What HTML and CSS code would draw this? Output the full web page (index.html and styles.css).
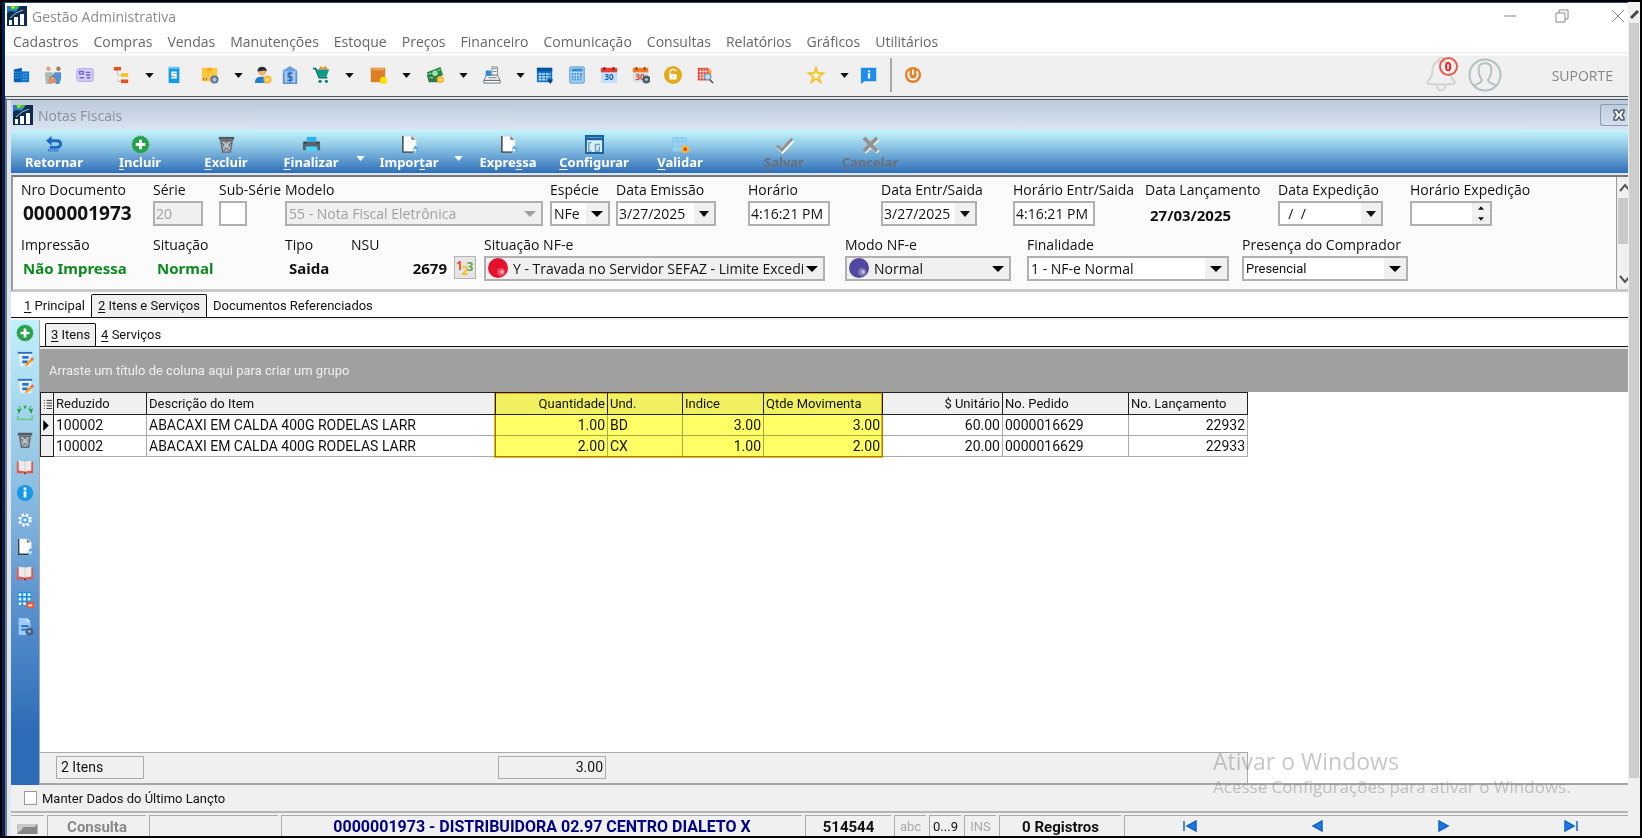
FILE: index.html
```html
<!DOCTYPE html>
<html lang="pt-BR">
<head>
  <meta charset="UTF-8" />
  <meta name="viewport" content="width=device-width, initial-scale=1" />
  <title>Gestão Administrativa</title>
  <link rel="stylesheet" href="styles.css">
</head>
<body>
  <!-- Shared icons -->
  <svg class="sprite" aria-hidden="true">
    <symbol id="i-logo" viewBox="0 0 20 20">
      <rect width="20" height="20" fill="#0d2c4f"/>
      <path d="M0 0h13L9 6 3 5 0 7z" fill="#2b76d2"/><path d="M3 0h9l-2 3-6 1z" fill="#35c532"/><path d="M4 1l4-1-2 3z" fill="#e7e531"/>
      <path d="M2 14h3v5H2zM7 11h4v8H7zM13 8h4v11h-4z" fill="#fff"/><path d="M3 12l6-5 7-3" stroke="#9fc0dd" fill="none"/>
    </symbol>
    <symbol id="i-plus" viewBox="0 0 20 20">
      <circle cx="10" cy="10" r="9" fill="#22a34a" stroke="#5a9c5f" stroke-dasharray="2 2"/>
      <path d="M10 5v10M5 10h10" stroke="#fff" stroke-width="3"/>
    </symbol>
    <symbol id="i-trash" viewBox="0 0 20 20">
      <path d="M2 2h16v3H2z" fill="#59595c"/><path d="M4 6h12l-2 12H6z" fill="#a9b5bd" stroke="#66696c" stroke-width="1.500"/>
      <path d="M5 8l8 9M15 8l-8 9M8 6l6 6M12 6l-6 6" stroke="#5d6062"/><circle cx="10" cy="11" r="2.500" fill="#b9c3ca"/>
    </symbol>
    <symbol id="i-page" viewBox="0 0 20 20">
      <path d="M3 1h10l4 4v13H3z" fill="#fff" stroke="#c9d3da"/><path d="M3 1v17h11" fill="none" stroke="#3b4146" stroke-width="1.500"/>
      <path d="M12 1v4h4z" fill="#6d767c"/><path d="M16 11l3 3v4h-5v-4z" fill="#55a8e6"/><circle cx="16" cy="16" r="1.500" fill="#dff2ff"/>
    </symbol>
    <symbol id="i-edit" viewBox="0 0 20 20">
      <path d="M3 3h14v14H5z" fill="#e9eef3"/><path d="M2 2h16" stroke="#3266c4" stroke-width="2"/>
      <path d="M7 7h7M7 12h6" stroke="#1d77d4" stroke-width="3"/><path d="M10 17l1-3 6-6 2 2-6 6z" fill="#fb9a12"/><path d="M16 9l2-2 2 2-2 2z" fill="#ee6257"/>
    </symbol>
    <symbol id="i-book" viewBox="0 0 20 20">
      <path d="M1 4h18v13H1z" fill="#e85648"/><path d="M3 3l7 1 7-1v11l-7 1-7-1z" fill="#ececec"/><path d="M10 4v11" stroke="#ccc"/><path d="M9 16h2v2H9z" fill="#812c24"/>
    </symbol>
    <symbol id="i-caret" viewBox="0 0 10 6"><path d="M0 0h10L5 6z" fill="currentColor"/></symbol>
    <symbol id="i-ball" viewBox="0 0 20 20">
      <circle cx="10" cy="10" r="10" fill="currentColor"/><circle cx="13" cy="14" r="4" fill="#fff" opacity=".25"/><circle cx="14" cy="14" r="2" fill="#fff" opacity=".5"/>
    </symbol>
  </svg>

  <div class="screen">
    <div class="app">
      <header class="titlebar">
        <svg class="logo"><use href="#i-logo"/></svg>
        <h1 class="app-title">Gestão Administrativa</h1>
        <div class="window-buttons">
          <button aria-label="Minimizar"><svg viewBox="0 0 14 14"><path d="M1 7h12"/></svg></button>
          <button aria-label="Restaurar"><svg viewBox="0 0 14 14"><path d="M1 4h9v9H1zM4 4V1h9v9h-3"/></svg></button>
          <button aria-label="Fechar"><svg viewBox="0 0 14 14"><path d="M1 1l12 12M13 1L1 13"/></svg></button>
        </div>
      </header>

      <nav class="menu">
        <a href="#">Cadastros</a><a href="#">Compras</a><a href="#">Vendas</a><a href="#">Manutenções</a><a href="#">Estoque</a><a href="#">Preços</a><a href="#">Financeiro</a><a href="#">Comunicação</a><a href="#">Consultas</a><a href="#">Relatórios</a><a href="#">Gráficos</a><a href="#">Utilitários</a>
      </nav>

      <div class="toolbar">
        <button class="tool" aria-label="Empresas"><svg viewBox="0 0 20 20"><path d="M2 4l9-2v16H2z" fill="#0b62b5"/><path d="M10 6h9v12h-9z" fill="#1377cf"/><path d="M3 7h7M3 10h7M3 13h7M12 9h6M12 12h6M12 15h6" stroke="#57b3f0" stroke-dasharray="2 1"/></svg></button>
        <button class="tool" aria-label="Clientes"><svg viewBox="0 0 20 20"><circle cx="5" cy="3" r="2.500" fill="#dca678"/><circle cx="16" cy="3" r="2.500" fill="#ad7b52"/><path d="M1 7h8l3 4-3 2v7H2z" fill="#a9bdb4"/><path d="M12 7h7v7l-2 6h-4l-1-6-3-3z" fill="#5292cf"/><path d="M5 14h8v5H5z" fill="#e98c64"/><path d="M7 14v-2h4v2" stroke="#b4583c" fill="none"/></svg></button>
        <button class="tool" aria-label="Cartões"><svg viewBox="0 0 20 20"><rect x="1" y="3" width="18" height="14" rx="2" fill="#d5cffa" stroke="#a69ae8"/><path d="M4 6h4v3H4zM4 13h5M11 7h5M11 10h5M12 13h4" stroke="#6f60c8" fill="none" stroke-width="1.500"/></svg></button>
        <span class="tool-group">
          <button aria-label="Estrutura"><svg viewBox="0 0 20 20"><path d="M6 15v2h6M6 5v5h6" stroke="#bbb" fill="none"/><path d="M2 1h8v4H2z" fill="#e65122"/><path d="M10 8h8v4h-8z" fill="#fcc311"/><path d="M10 15h8v4h-8z" fill="#e65122"/></svg></button>
          <button class="drop" aria-label="Mais opções de estrutura"><svg><use href="#i-caret"/></svg></button>
        </span>
        <button class="tool" aria-label="Serviços"><svg viewBox="0 0 20 20"><path d="M4 1h12v18H4z" fill="#179ae6"/><path d="M4 1h12v2H4z" fill="#76c8f4"/><path d="M13 7H8v3h4v3H7" stroke="#fff" stroke-width="2" fill="none"/></svg></button>
        <span class="tool-group">
          <button aria-label="Produtos"><svg viewBox="0 0 20 20"><path d="M1 2h17v15H1z" fill="#fdc740"/><path d="M7 2h5v4H7z" fill="#f6a921"/><path d="M3 13v3M6 13v3" stroke="#7c6a36"/><circle cx="15" cy="15" r="3.500" fill="#b5bfcc" stroke="#53719b" stroke-width="2"/></svg></button>
          <button class="drop" aria-label="Mais opções de produtos"><svg><use href="#i-caret"/></svg></button>
        </span>
        <button class="tool" aria-label="Vendedores"><svg viewBox="0 0 20 20"><path d="M1 19c0-7 5-7 8-7s7 1 7 7z" fill="#247fd0"/><circle cx="9" cy="6" r="4.500" fill="#f3b36d"/><path d="M4 6c-1-7 11-7 10 0-3-2-6 0-10 0z" fill="#232b35"/><circle cx="15" cy="15" r="4.500" fill="#fcbd32"/><circle cx="15" cy="15" r="2" fill="#ffe387"/></svg></button>
        <button class="tool tool-narrow" aria-label="Banco"><svg viewBox="0 0 20 20"><path d="M10 0l8 5v2H2V5z" fill="#6ba0df"/><path d="M3 6h14v12H3z" fill="#a7caef"/><path d="M2 18h16v2H2zM2 7h2v11H2zM16 7h2v11h-2z" fill="#5d92d5"/><path d="M13 8H8v4h4v4H7M10 6v12" stroke="#2d67bd" stroke-width="1.500" fill="none"/></svg></button>
        <span class="tool-group">
          <button aria-label="Vendas"><svg viewBox="0 0 20 20"><path d="M7 4l3-4 2 2 3-2 3 4z" fill="#f4911f"/><path d="M1 3h3l4 10h9" stroke="#0c766e" stroke-width="2" fill="none"/><path d="M5 4h14l-3 8H8z" fill="#0c9b8b"/><circle cx="9" cy="17" r="1.800" fill="#0c7f74"/><circle cx="16" cy="17" r="1.800" fill="#0c7f74"/></svg></button>
          <button class="drop" aria-label="Mais opções de vendas"><svg><use href="#i-caret"/></svg></button>
        </span>
        <span class="tool-group">
          <button aria-label="Estoque"><svg viewBox="0 0 20 20"><path d="M2 2h16v16H2z" fill="#dd7d25"/><path d="M2 2h16l-2 3H4z" fill="#f0a054"/><circle cx="16" cy="16" r="4" fill="#ffe000"/></svg></button>
          <button class="drop" aria-label="Mais opções de estoque"><svg><use href="#i-caret"/></svg></button>
        </span>
        <span class="tool-group">
          <button aria-label="Financeiro"><svg viewBox="0 0 20 20"><path d="M1 7l15-6 3 9-15 6z" fill="#258d45"/><path d="M1 10h16v8H3z" fill="#2d7c45"/><circle cx="10" cy="8" r="3" fill="#a8dfb2"/><path d="M3 9l3-1M13 5l3-1M4 13h4" stroke="#c0e9c7"/><circle cx="16" cy="15" r="4" fill="#fdb72e"/><circle cx="16" cy="15" r="1.500" fill="#ffe48a"/></svg></button>
          <button class="drop" aria-label="Mais opções de financeiro"><svg><use href="#i-caret"/></svg></button>
        </span>
        <span class="tool-group">
          <button aria-label="Caixa"><svg viewBox="0 0 20 20"><path d="M4 10h12l3 6H1zM1 16h18v3H1z" fill="#f4f6f8" stroke="#687078"/><path d="M10 1h6v9h-6z" fill="#fff" stroke="#777"/><path d="M3 5h6v6H3z" fill="#2c8bd8"/><path d="M11 3h4M11 6h4M6 13h9" stroke="#6b7177"/></svg></button>
          <button class="drop" aria-label="Mais opções de caixa"><svg><use href="#i-caret"/></svg></button>
        </span>
        <button class="tool" aria-label="Agenda"><svg viewBox="0 0 20 20"><path d="M1 2h17v16H1z" fill="#1675c7"/><path d="M1 2h17v4H1z" fill="#0755a0"/><path d="M3 9h13M3 12h13M3 15h10" stroke="#b9e0ff" stroke-width="2" stroke-dasharray="3 1"/><path d="M12 15h7l-3 5z" fill="#06457f"/></svg></button>
        <button class="tool" aria-label="Calculadora"><svg viewBox="0 0 20 20"><rect x="2" y="1" width="16" height="18" rx="1" fill="#a9d5f6" stroke="#3f92d2"/><path d="M4 3h12v3H4z" fill="#368bc9"/><path d="M4 9h12M4 12h12M4 15h12" stroke="#4797d0" stroke-width="2" stroke-dasharray="2 1"/><path d="M15 8v3" stroke="#e34545"/></svg></button>
        <button class="tool" aria-label="Calendário"><svg viewBox="0 0 20 20"><path d="M1 3h18v16H1z" fill="#c5dffa"/><path d="M1 2h18v5H1z" fill="#ea3c34"/><path d="M5 1v4M15 1v4" stroke="#8b251e" stroke-width="2"/><text x="10" y="16" class="cal-day">30</text></svg></button>
        <button class="tool" aria-label="Configurar calendário"><svg viewBox="0 0 20 20"><path d="M1 3h17v15H1z" fill="#dadde2"/><path d="M1 2h17v5H1z" fill="#f37c20"/><path d="M5 1v4M14 1v4" stroke="#9d4610" stroke-width="2"/><text x="9" y="16" class="cal-day cal-day-red">30</text><circle cx="16" cy="15" r="3" fill="none" stroke="#485d6b" stroke-width="3"/></svg></button>
        <button class="tool" aria-label="Bloquear"><svg viewBox="0 0 20 20"><circle cx="10" cy="10" r="10" fill="#e5a91c"/><path d="M6 9h8v6H6z" fill="#fff"/><path d="M7 9V6c0-3 6-3 6 0" stroke="#fff" stroke-width="1.500" fill="none"/><path d="M10 11v2" stroke="#e5a91c"/></svg></button>
        <button class="tool" aria-label="Pesquisar"><svg viewBox="0 0 20 20"><path d="M2 2h12v14H2z" fill="#e54838"/><path d="M5 3v12M8 3v12M11 3v12M3 6h10M3 10h10M3 13h10" stroke="#ffd0c9"/><path d="M14 4h3v10h-3z" fill="#f6a31d"/><circle cx="13" cy="12" r="3.500" fill="#b9e3fb" stroke="#4d8bb5"/><path d="M15 15l4 4" stroke="#444" stroke-width="1.500"/></svg></button>
        <span class="tool-group tool-favorite">
          <button aria-label="Favoritos"><svg viewBox="0 0 20 20"><path d="M10 2l2 6h6l-5 4 2 6-5-4-5 4 2-6-5-4h6z" fill="#fff9df" stroke="#fcc023" stroke-width="2"/></svg></button>
          <button class="drop" aria-label="Mais favoritos"><svg><use href="#i-caret"/></svg></button>
        </span>
        <button class="tool" aria-label="Informações"><svg viewBox="0 0 20 20"><path d="M1 2h17v15H5l-4 3z" fill="#1e8deb"/><path d="M10 5v2M10 8v6" stroke="#fff" stroke-width="2.500"/></svg></button>
        <span class="separator"></span>
        <button class="tool" aria-label="Sair"><svg viewBox="0 0 20 20"><circle cx="10" cy="10" r="9" fill="#e98028"/><path d="M6 6c-3 4 0 9 4 9s7-5 4-9M10 4v6" stroke="#fff" stroke-width="2" fill="none"/></svg></button>

        <div class="account">
          <button class="bell" aria-label="Notificações">
            <svg viewBox="0 0 30 36"><path d="M15 4c-8 0-8 6-9 13-1 6-5 6-5 9 0 2 28 2 28 0 0-3-4-3-5-9-1-7-1-13-9-13zM12 4c0-4 6-4 6 0M11 29c0 6 8 6 8 0" fill="none" stroke="#d3d3d3" stroke-width="2"/></svg>
            <span class="badge">0</span>
          </button>
          <button class="avatar" aria-label="Usuário"><svg viewBox="0 0 34 34"><circle cx="17" cy="17" r="15.500"/><path d="M6 28c3-3 7-2 8-6-3-4-4-8-3-13 1-5 11-5 12 0 1 5 0 9-3 13 1 4 5 3 8 6"/></svg></button>
          <span class="user-name">SUPORTE</span>
        </div>
      </div>

      <main class="child">
        <header class="child-title">
          <svg class="logo"><use href="#i-logo"/></svg>
          <h2>Notas Fiscais</h2>
          <button class="child-close" aria-label="Fechar Notas Fiscais"><svg viewBox="0 0 14 12"><path d="M2 1h3l2 3 2-3h3v2l-2 3 2 3v2H9L7 8l-2 3H2V9l2-3-2-3z" fill="#fff" stroke="#555d68" stroke-width="1.500"/></svg></button>
        </header>

        <div class="actions">
          <button><svg viewBox="0 0 20 20"><path d="M5 6h7c6 0 6 7 0 7H5" stroke="#1e69c5" stroke-width="3" fill="none"/><path d="M1 6l6-5v10z" fill="#1e69c5"/><path d="M3 16h12" stroke="#1e69c5" stroke-width="3" stroke-dasharray="1 1"/></svg><span>Retornar</span></button>
          <button><svg><use href="#i-plus"/></svg><span><u>I</u>ncluir</span></button>
          <button><svg><use href="#i-trash"/></svg><span><u>E</u>xcluir</span></button>
          <button class="with-drop"><svg viewBox="0 0 20 20"><path d="M5 2h10v5H5z" fill="#26b6ee"/><path d="M1 7h18v9H1z" fill="#59616a"/><path d="M4 12h12v5H4z" fill="#48d4fa"/><path d="M2 7h3v2H2zM15 7h3v2h-3z" fill="#343b42"/></svg><span><u>F</u>inalizar</span></button>
          <button class="drop" aria-label="Opções de finalizar"><svg><use href="#i-caret"/></svg></button>
          <button class="with-drop"><svg><use href="#i-page"/></svg><span>Impor<u>t</u>ar</span></button>
          <button class="drop" aria-label="Opções de importar"><svg><use href="#i-caret"/></svg></button>
          <button><svg><use href="#i-page"/></svg><span>Expre<u>s</u>sa</span></button>
          <button><svg viewBox="0 0 20 20"><path d="M1 1h18v18H1z" fill="#d9f0fb" stroke="#19649f" stroke-width="2"/><path d="M1 4h18" stroke="#19649f" stroke-width="3"/><path d="M7 8H4v9h3M16 10h-5v7h4v-5" stroke="#6c9cc2" fill="none" stroke-width="1.500"/></svg><span><u>C</u>onfigurar</span></button>
          <button><svg viewBox="0 0 20 20"><path d="M2 3h14v14H2zM2 7h14M2 12h14M7 3v14M12 3v14" stroke="#85c5f2" fill="#9bd2f2" stroke-width="1"/><circle cx="15" cy="15" r="3" fill="#e5482c" stroke="#f7bd22" stroke-width="2"/></svg><span><u>V</u>alidar</span></button>
          <button class="action-save" disabled><svg viewBox="0 0 20 20"><path d="M3 13l5 5L19 6" stroke="#fff" stroke-width="3" fill="none"/><path d="M2 11l5 5L18 4" stroke="#929292" stroke-width="3" fill="none"/></svg><span><u>S</u>alvar</span></button>
          <button disabled><svg viewBox="0 0 20 20"><path d="M4 4l14 14M18 4L4 18" stroke="#fff" stroke-width="4"/><path d="M3 3l14 14M17 3L3 17" stroke="#929292" stroke-width="4"/></svg><span><u>C</u>ancelar</span></button>
        </div>

        <form class="doc">
          <div class="doc-fields">
            <div class="row row-top">
              <div class="field"><span class="label">Nro Documento</span><strong class="doc-number">0000001973</strong></div>
              <div class="field"><label for="serie">Série</label><input class="w-50" id="serie" value="20" disabled></div>
              <div class="field"><label for="sub">Sub-Série</label><input class="w-28" id="sub"></div>
              <div class="field"><label for="modelo">Modelo</label><select class="w-258" id="modelo" disabled><option>55 - Nota Fiscal Eletrônica</option></select></div>
              <div class="field"><label for="especie">Espécie</label><select class="w-60" id="especie"><option>NFe</option></select></div>
              <div class="field"><label for="emissao">Data Emissão</label><div class="date w-100"><input id="emissao" value="3/27/2025"><button type="button" aria-label="Abrir calendário de emissão"><svg><use href="#i-caret"/></svg></button></div></div>
              <div class="field"><label for="hora">Horário</label><input class="w-82" id="hora" value="4:16:21 PM"></div>
              <div class="field"><label for="entrada">Data Entr/Saida</label><div class="date w-96"><input id="entrada" value="3/27/2025"><button type="button" aria-label="Abrir calendário de entrada"><svg><use href="#i-caret"/></svg></button></div></div>
              <div class="field"><label for="horaentrada">Horário Entr/Saida</label><input class="w-82" id="horaentrada" value="4:16:21 PM"></div>
              <div class="field"><span class="label">Data Lançamento</span><strong class="launch-date">27/03/2025</strong></div>
              <div class="field"><label for="expedicao">Data Expedição</label><div class="date w-105"><input id="expedicao" value="  /  /"><button type="button" aria-label="Abrir calendário de expedição"><svg><use href="#i-caret"/></svg></button></div></div>
              <div class="field"><label for="horaexp">Horário Expedição</label><div class="date w-82"><input id="horaexp"><span class="spin"><button type="button" aria-label="Aumentar"><svg class="flip"><use href="#i-caret"/></svg></button><button type="button" aria-label="Diminuir"><svg><use href="#i-caret"/></svg></button></span></div></div>
            </div>
            <div class="row row-bottom">
              <div class="field"><span class="label">Impressão</span><strong class="state state-clipped">Não Impressa</strong></div>
              <div class="field"><span class="label">Situação</span><strong class="state">Normal</strong></div>
              <div class="field"><span class="label">Tipo</span><strong class="kind">Saida</strong></div>
              <div class="field"><span class="label">NSU</span><div class="nsu"><strong>2679</strong><button type="button" aria-label="Numeração"><svg viewBox="0 0 20 20"><text x="0" y="12" fill="#ee4b24">1</text><text x="6" y="18" fill="#f9b91c">2</text><text x="12" y="13" fill="#5fa63a">3</text></svg></button></div></div>
              <div class="field"><label for="situacao">Situação NF-e</label><div class="status w-341"><svg class="ball ball-red"><use href="#i-ball"/></svg><select id="situacao"><option>Y - Travada no Servidor SEFAZ - Limite Excedi</option></select></div></div>
              <div class="field"><label for="modo">Modo NF-e</label><div class="status w-166"><svg class="ball ball-blue"><use href="#i-ball"/></svg><select id="modo"><option>Normal</option></select></div></div>
              <div class="field"><label for="finalidade">Finalidade</label><select class="w-202" id="finalidade"><option>1 - NF-e Normal</option></select></div>
              <div class="field"><label for="presenca">Presença do Comprador</label><select class="w-166 buyer" id="presenca"><option>Presencial</option></select></div>
            </div>
          </div>
          <div class="doc-scroll"><svg class="scroll-arrow" viewBox="0 0 10 10"><path d="M2 8l5-6 5 6"/></svg><div class="thumb"></div><svg class="scroll-arrow" viewBox="0 0 10 10"><path d="M2 2l5 6 5-6"/></svg></div>
        </form>

        <div class="tabs tabs-main" role="tablist">
          <button role="tab"><span><u>1</u> Principal</span></button>
          <button role="tab" class="active" aria-selected="true"><span><u>2</u> Itens e Serviços</span></button>
          <button role="tab">Documentos Referenciados</button>
        </div>

        <section class="body">
          <nav class="side">
            <div class="side-tools">
              <button aria-label="Incluir item"><svg><use href="#i-plus"/></svg></button>
              <button aria-label="Alterar item"><svg><use href="#i-edit"/></svg></button>
              <button aria-label="Editar dados"><svg><use href="#i-edit"/></svg></button>
              <button aria-label="Ratear"><svg viewBox="0 0 20 20"><path d="M2 13v4h16v-4" fill="none" stroke="#73c78a" stroke-width="2"/><path d="M1 5l5 1-3 5zM8 2h4l-2 4zM19 5l-5 1 3 5z" fill="#28a745"/><path d="M3 2l3 4M17 2l-3 4" stroke="#28a745"/></svg></button>
              <button aria-label="Excluir item"><svg><use href="#i-trash"/></svg></button>
              <button aria-label="Livro"><svg><use href="#i-book"/></svg></button>
              <button aria-label="Informações do item"><svg viewBox="0 0 20 20"><circle cx="10" cy="10" r="9" fill="#1599e5"/><path d="M10 4v3M10 8v7" stroke="#fff" stroke-width="3"/></svg></button>
              <button aria-label="Opções"><svg viewBox="0 0 20 20"><circle cx="10" cy="10" r="5" fill="#fff" stroke="#fff" stroke-width="5" stroke-dasharray="2 2"/><circle cx="10" cy="10" r="3" fill="#dceffc" stroke="#4a9fe0" stroke-width="2"/></svg></button>
              <button aria-label="Documento"><svg><use href="#i-page"/></svg></button>
              <button aria-label="Registro"><svg><use href="#i-book"/></svg></button>
              <button aria-label="Salvar grade"><svg viewBox="0 0 20 20"><path d="M2 1h15v15H2z" fill="#208fe1"/><path d="M3 4h13M3 9h13M3 14h13" stroke="#e4f5ff" stroke-width="3" stroke-dasharray="3 2"/><path d="M12 12h8v7h-8z" fill="#f4552b"/><path d="M14 15h4v2h-4z" fill="#fff"/></svg></button>
              <button aria-label="Configurar documento"><svg viewBox="0 0 20 20"><path d="M3 0h9l4 4v15H3z" fill="#9dcbff"/><path d="M12 0v4h4z" fill="#e5f3ff"/><path d="M6 9h8M6 13h5" stroke="#1568cf" stroke-width="2"/><circle cx="15" cy="15" r="3" fill="none" stroke="#49657e" stroke-width="3"/></svg></button>
            </div>
          </nav>
          <div class="items">
            <div class="tabs tabs-sub" role="tablist">
              <button role="tab" class="active" aria-selected="true"><span><u>3</u> Itens</span></button>
              <button role="tab"><span><u>4</u> Serviços</span></button>
            </div>
            <div class="group-panel">Arraste um título de coluna aqui para criar um grupo</div>
            <div class="grid">
              <table>
                <colgroup><col class="c-mark"><col class="c-code"><col class="c-desc"><col class="c-qty"><col class="c-unit"><col class="c-index"><col class="c-move"><col class="c-price"><col class="c-order"><col class="c-entry"></colgroup>
                <thead>
                  <tr><th><svg class="rows-icon" viewBox="0 0 10 12"><path d="M1 2h1M1 5h1M1 8h1M1 11h1M4 2h6M4 5h6M4 8h6M4 11h6" stroke="#222"/></svg></th><th>Reduzido</th><th>Descrição do Item</th><th class="num">Quantidade</th><th>Und.</th><th>Indice</th><th>Qtde Movimenta</th><th class="num">$ Unitário</th><th>No. Pedido</th><th>No. Lançamento</th></tr>
                </thead>
                <tbody>
                  <tr><td class="mark"><svg class="current" viewBox="0 0 6 12"><path d="M0 0l6 6-6 6z"/></svg></td><td>100002</td><td>ABACAXI EM CALDA 400G RODELAS LARR</td><td class="num">1.00</td><td>BD</td><td class="num">3.00</td><td class="num">3.00</td><td class="num">60.00</td><td>0000016629</td><td class="num">22932</td></tr>
                  <tr><td class="mark"></td><td>100002</td><td>ABACAXI EM CALDA 400G RODELAS LARR</td><td class="num">2.00</td><td>CX</td><td class="num">1.00</td><td class="num">2.00</td><td class="num">20.00</td><td>0000016629</td><td class="num">22933</td></tr>
                </tbody>
              </table>
              <div class="highlight"></div>
            </div>
            <div class="totals"><span class="total-count">2 Itens</span><span class="total-qty">3.00</span></div>
          </div>
        </section>

        <div class="keep"><input type="checkbox" id="manter"><label for="manter">Manter Dados do Último Lançto</label></div>

        <footer class="statusbar">
          <span class="s-icon"><svg viewBox="0 0 20 10"><path d="M0 0h20v10H0z" fill="#868686"/><path d="M0 0h20l-3 3H6L4 6 0 9z" fill="#c9c9c9"/></svg></span>
          <span class="s-mode">Consulta</span>
          <span class="s-empty"></span>
          <span class="s-title">0000001973 - DISTRIBUIDORA 02.97 CENTRO DIALETO X</span>
          <span class="s-id">514544</span>
          <span class="s-key off">abc</span>
          <span class="s-key">0...9</span>
          <span class="s-key off">INS</span>
          <span class="s-count">0 Registros</span>
          <span class="s-nav">
            <button aria-label="Primeiro"><svg viewBox="0 0 14 12"><path d="M1 1v10" /><path d="M13 1v10L4 6z"/></svg></button>
            <button aria-label="Anterior"><svg viewBox="0 0 14 12"><path d="M12 1v10L3 6z"/></svg></button>
            <button aria-label="Próximo"><svg viewBox="0 0 14 12"><path d="M2 1v10l9-5z"/></svg></button>
            <button aria-label="Último"><svg viewBox="0 0 14 12"><path d="M1 1v10l9-5z"/><path d="M13 1v10"/></svg></button>
          </span>
        </footer>
      </main>
    </div>
    <div class="page-scroll"><svg viewBox="0 0 10 10"><path d="M2 8l7-7"/></svg><div class="page-thumb"></div></div>
    <div class="watermark"><p class="watermark-title">Ativar o Windows</p><p>Acesse Configurações para ativar o Windows.</p></div>
  </div>
</body>
</html>
```
FILE: styles.css
```css
* {
  box-sizing: border-box;
}

body {
  margin: 0;
  background: #000;
  color: #111;
  font-family: "Open Sans", "Noto Sans", sans-serif;
  font-size: 14px;
}

button, input, select {
  font: inherit;
  color: inherit;
  margin: 0;
  padding: 0;
  border: 0;
  border-radius: 0;
  background: none;
}

button {
  display: flex;
  align-items: center;
  justify-content: center;
}

svg {
  display: block;
  flex: none;
}

u {
  text-underline-offset: 2px;
}

.sprite {
  position: absolute;
  width: 0;
  height: 0;
}

.screen {
  position: relative;
  display: flex;
  height: 100vh;
  padding: 2px;
  overflow: hidden;
}

.app {
  flex: 1;
  min-width: 0;
  display: flex;
  flex-direction: column;
  border-left: 3px solid #08205a;
  border-top: 1px solid #2d4d80;
  background: #fff;
}

/* Main window title, menu and toolbar */
.titlebar {
  display: flex;
  align-items: center;
  height: 26px;
  padding-left: 2px;
  color: #8a8a8a;
}

.logo {
  width: 20px;
  height: 20px;
}

.app-title, .child-title h2 {
  margin: 0 0 0 5px;
  font-size: 14px;
  font-weight: 400;
}

.window-buttons {
  display: flex;
  margin-left: auto;
}

.window-buttons button {
  width: 52px;
  height: 24px;
}

.window-buttons button:last-child {
  width: 40px;
  padding-left: 20px;
}

.window-buttons svg {
  width: 14px;
  height: 14px;
  fill: none;
  stroke: #888;
}

.menu {
  display: flex;
  gap: 15px;
  height: 24px;
  padding-left: 8px;
  line-height: 26px;
  border-bottom: 1px solid #eee;
}

.menu a {
  color: #666;
  text-decoration: none;
}

.toolbar {
  display: flex;
  align-items: center;
  height: 43px;
  padding-bottom: 2px;
  background: #f0f0f0;
  border-top: 3px solid #fafafa;
}

.tool {
  width: 32px;
  height: 32px;
}

.tool-narrow {
  width: 22px;
}

.tool svg, .tool-group svg {
  width: 18px;
  height: 18px;
}

.tool-group {
  display: flex;
  align-items: center;
  width: 57px;
}

.tool-group button {
  width: 40px;
  height: 32px;
}

.tool-group .drop {
  width: 17px;
}

.tool-group .drop svg {
  width: 9px;
  height: 5px;
}

.tool-favorite {
  margin-left: 75px;
}

.separator {
  width: 2px;
  height: 34px;
  margin: 0 5px;
  background: #aaa;
}

.cal-day {
  font-size: 9px;
  font-weight: 700;
  fill: #1660c0;
  text-anchor: middle;
}

.cal-day-red {
  fill: #d5452d;
}

.account {
  display: flex;
  align-items: center;
  margin-left: auto;
  padding-right: 15px;
}

.bell {
  position: relative;
  width: 30px;
  height: 36px;
}

.bell svg {
  width: 30px;
  height: 36px;
}

.badge {
  position: absolute;
  top: 0;
  right: -2px;
  width: 19px;
  height: 19px;
  border: 2px solid #e95b50;
  border-radius: 50%;
  color: #f01414;
  font-size: 12px;
  font-weight: 700;
  line-height: 15px;
}

.avatar {
  margin: 0 50px 0 12px;
}

.avatar svg {
  width: 34px;
  height: 34px;
  fill: none;
  stroke: #b3c1c1;
  stroke-width: 2;
}

.user-name {
  color: #858585;
}

/* Child window */
.child {
  flex: 1;
  min-height: 0;
  display: flex;
  flex-direction: column;
  padding-left: 4px;
  border-top: 4px double #555;
  border-left: 2px solid #777;
  background: #dce7f3;
}

.child-title {
  display: flex;
  align-items: center;
  height: 30px;
  padding-left: 2px;
  color: #8b9096;
  background: linear-gradient(#bccad9, #d8e4f2);
}

.child-close {
  width: 28px;
  height: 22px;
  margin-left: auto;
  padding-left: 8px;
  border: 1px solid #8d9bb0;
  border-right: 0;
  border-radius: 3px 0 0 3px;
}

.child-close svg {
  width: 14px;
  height: 12px;
}

.actions {
  display: flex;
  height: 43px;
  background: linear-gradient(#c4f5fc, #8cc4e4 40%, #2e6eb8);
  color: #fff;
  font-family: "Noto Sans", sans-serif;
  font-size: 13px;
  font-weight: 700;
}

.actions button {
  flex-direction: column;
  width: 86px;
  padding-top: 2px;
  line-height: 17px;
}

.actions .with-drop {
  width: 84px;
}

.actions .drop {
  width: 14px;
  padding-bottom: 0;
}

.actions svg {
  width: 19px;
  height: 19px;
}

.actions .drop svg {
  width: 9px;
  height: 5px;
  margin-top: 12px;
}

.actions button:disabled {
  color: #69717c;
}

.actions .action-save {
  margin-left: 18px;
}

/* Document header */
.doc {
  display: flex;
  margin-top: 2px;
  border-top: 2px solid #777;
  border-left: 2px solid #999;
  border-bottom: 3px solid #c8c8c8;
  background: #fbfbfb;
}

.doc-fields {
  flex: 1;
  min-width: 0;
  padding: 3px 7px 8px 8px;
}

.row {
  display: grid;
}

.row-top {
  grid-template-columns: 132fr 66fr 66fr 265fr 66fr 132fr 133fr 132fr 132fr 133fr 132fr 199fr;
  margin-bottom: 9px;
}

.row-bottom {
  grid-template-columns: 132fr 132fr 66fr 133fr 361fr 182fr 215fr 367fr;
}

.field {
  min-width: 0;
  white-space: nowrap;
}

.field label, .label {
  display: block;
  height: 21px;
  line-height: 20px;
}

.field input, .field select, .date, .status {
  display: flex;
  height: 25px;
  border: 2px solid #b0b0b0;
  background-color: #fff;
  outline: none;
}

.field input {
  min-width: 0;
  padding: 0 1px;
}

.field select {
  appearance: none;
  padding: 0 20px 0 2px;
  background-image: url("data:image/svg+xml,%3Csvg xmlns='http://www.w3.org/2000/svg' width='22' height='21'%3E%3Crect width='22' height='21' fill='%23f0f0f0'/%3E%3Cpath d='M5 8h12l-6 6z'/%3E%3C/svg%3E");
  background-repeat: no-repeat;
  background-position: right center;
}

.field input:disabled, .field select:disabled {
  background-color: #f0f0f0;
  color: #a0a0a0;
  opacity: 1;
}

.field select:disabled {
  background-image: url("data:image/svg+xml,%3Csvg xmlns='http://www.w3.org/2000/svg' width='22' height='21'%3E%3Cpath d='M5 8h12l-6 6z' fill='%23a0a0a0'/%3E%3C/svg%3E");
}

.date input, .status select {
  flex: 1;
  height: 21px;
  border: 0;
}

.date > button {
  width: 20px;
  background: #f0f0f0;
}

.date > button svg {
  width: 12px;
  height: 6px;
}

.spin {
  display: flex;
  flex-direction: column;
  gap: 1px;
  width: 18px;
}

.spin button {
  flex: 1;
  background: #f0f0f0;
}

.spin svg {
  width: 6px;
  height: 4px;
}

.flip {
  transform: rotate(180deg);
}

.w-28 { width: 28px; }
.w-50 { width: 50px; }
.w-60 { width: 60px; }
.w-82 { width: 82px; }
.w-96 { width: 96px; }
.w-100 { width: 100px; }
.w-105 { width: 105px; }
.w-166 { width: 166px; }
.w-202 { width: 202px; }
.w-258 { width: 258px; }
.w-341 { width: 341px; }

.field strong {
  display: block;
  font-family: "Noto Sans", sans-serif;
  line-height: 25px;
}

.field .doc-number {
  padding-left: 2px;
  font-size: 19px;
}

.field .launch-date {
  padding: 3px 0 0 5px;
  font-size: 15px;
  line-height: 22px;
}

.field .state {
  padding-left: 4px;
  font-size: 15px;
  color: #0b8a1d;
}

.field .state-clipped {
  width: 110px;
  padding-left: 2px;
}

.field .kind {
  padding-left: 4px;
  font-size: 15px;
}

.nsu {
  display: flex;
  justify-content: flex-end;
  gap: 7px;
  padding-right: 8px;
  font-size: 15px;
}

.nsu button {
  width: 22px;
  height: 23px;
  border: 1px solid #b5b5b5;
  background: #e5e5e5;
}

.nsu svg {
  width: 18px;
  height: 18px;
  overflow: visible;
  font-size: 13px;
  font-weight: 700;
}

.status, .field .status select {
  background-color: #f0f0f0;
}

.status select {
  min-width: 0;
  padding-left: 5px;
}

.ball {
  width: 20px;
  height: 20px;
  margin-left: 2px;
}

.ball-red { color: #e4112c; }
.ball-blue { color: #50489e; }

.field .buyer {
  font-family: Roboto, sans-serif;
  font-size: 13px;
}

.doc-scroll {
  display: flex;
  flex-direction: column;
  align-items: center;
  width: 12px;
  border-left: 1px solid #999;
  background: #f0f0f0;
}

.scroll-arrow {
  width: 10px;
  height: 10px;
  margin: 6px 0 5px 1px;
  fill: none;
  stroke: #555;
  stroke-width: 2;
}

.thumb {
  width: 10px;
  height: 46px;
  margin-bottom: auto;
  background: #c9c9c9;
}

/* Tabs */
.tabs {
  display: flex;
  align-items: flex-end;
  font-family: Roboto, sans-serif;
  font-size: 13px;
  background: #fff;
  border-bottom: 1px solid #111;
}

.tabs button {
  height: 22px;
  padding: 0 5px;
  line-height: 20px;
}

.tabs .active {
  height: 23px;
  border: 1px solid #111;
  border-bottom: 0;
  border-radius: 2px 2px 0 0;
  background: #f0f0f0;
}

.tabs-main {
  height: 26px;
  padding-left: 7px;
}

.tabs-main button {
  padding: 0 6px;
}

.tabs-sub {
  height: 27px;
  padding-left: 5px;
}

/* Items area */
.body {
  flex: 1;
  min-height: 0;
  display: flex;
  border-top: 2px solid #f3f3f3;
}

.side {
  width: 28px;
  background: linear-gradient(#c1f1fb, #8fc0e3 35%, #5d94cf 60%, #2d6db7 88%);
}

.side-tools {
  display: flex;
  flex-direction: column;
  align-items: center;
  height: 320px;
}

.side-tools button {
  flex: 1;
}

.side-tools svg {
  width: 18px;
  height: 18px;
}

.items {
  flex: 1;
  min-width: 0;
  display: flex;
  flex-direction: column;
  background: #fff;
  border-left: 1px solid #aaa;
  border-bottom: 2px solid #a5a5a5;
  font-family: Roboto, sans-serif;
}

.group-panel {
  height: 45px;
  padding-left: 9px;
  border-top: 2px solid #e8e8e8;
  background: #a0a0a0;
  color: #efefef;
  font-size: 13px;
  line-height: 44px;
}

.grid {
  position: relative;
  flex: 1;
}

table {
  width: 1207px;
  table-layout: fixed;
  border-collapse: collapse;
}

th, td {
  height: 21px;
  padding: 0 3px 0 2px;
  border: 1px solid #aaa;
  font-weight: 400;
  line-height: 20px;
  text-align: left;
  white-space: nowrap;
}

th {
  height: 22px;
  border-color: #222;
  background: #f0f0f0;
  font-size: 13px;
}

td.mark {
  border-color: #222;
  background: #f0f0f0;
}

th.num, td.num {
  padding: 0 2px 0 3px;
  text-align: right;
}

.rows-icon {
  width: 9px;
  height: 12px;
}

.current {
  width: 6px;
  height: 11px;
}

.c-mark { width: 13px; }
.c-code { width: 93px; }
.c-desc { width: 349px; }
.c-qty { width: 112px; }
.c-unit { width: 75px; }
.c-index { width: 81px; }
.c-move { width: 119px; }
.c-price { width: 120px; }
.c-order { width: 126px; }
.c-entry { width: 119px; }

.highlight {
  position: absolute;
  top: 0;
  left: 454px;
  width: 389px;
  height: 66px;
  border: 2px solid #f0b70a;
  background: #ffff66;
  mix-blend-mode: multiply;
}

.totals {
  display: flex;
  width: 1208px;
  height: 31px;
  padding: 3px 16px;
  border: 1px solid #aaa;
  border-left: 0;
  border-bottom: 0;
  background: #f0f0f0;
}

.totals span {
  height: 23px;
  padding: 0 2px 0 4px;
  border: 1px solid #aaa;
  line-height: 21px;
}

.total-count {
  width: 88px;
}

.total-qty {
  width: 108px;
  margin-left: 354px;
  text-align: right;
}

.keep {
  display: flex;
  align-items: center;
  gap: 5px;
  height: 26px;
  padding-left: 13px;
  background: #f0f0f0;
  font-family: Roboto, sans-serif;
  font-size: 13px;
}

.keep input {
  appearance: none;
  width: 13px;
  height: 14px;
  border: 1px solid #999;
  background: #fff;
}

/* Status bar */
.statusbar {
  display: flex;
  gap: 3px;
  height: 25px;
  padding-top: 2px;
  overflow: hidden;
  border-top: 2px solid #b5b5b5;
  background: #f0f0f0;
  font-family: Roboto, sans-serif;
  font-size: 15px;
  font-weight: 700;
  line-height: 22px;
  text-align: center;
  white-space: nowrap;
}

.statusbar > span {
  border-top: 1px solid #aaa;
  border-left: 1px solid #aaa;
}

.statusbar > .s-icon {
  width: 33px;
  padding: 8px 6px;
  border-left: 0;
}

.s-icon svg {
  width: 21px;
  height: 10px;
}

.s-mode {
  width: 99px;
  color: #888;
}

.s-empty { width: 129px; }
.s-id { width: 86px; }
.s-count { width: 122px; }

.s-title {
  flex: 1;
  color: #000080;
  font-size: 16px;
}

.s-key {
  width: 32px;
  font-size: 13px;
  font-weight: 400;
}

.off {
  color: #aaa;
}

.s-nav {
  display: flex;
  justify-content: space-between;
  width: 504px;
  padding: 0 50px 0 58px;
}

.s-nav svg {
  width: 14px;
  height: 12px;
  fill: #1b7be6;
  stroke: #1464c4;
  stroke-width: 1.5;
}

/* Outer scroll bar and the system notice over it */
.page-scroll {
  width: 12px;
  padding: 8px 1px 0;
  background: #f0f0f0;
}

.page-scroll svg {
  width: 10px;
  height: 10px;
  stroke: #444;
  stroke-width: 3;
}

.page-thumb {
  height: 755px;
  margin-top: 3px;
  background: #cdcdcd;
}

.watermark {
  position: absolute;
  right: 66px;
  bottom: 38px;
  width: 363px;
  color: rgba(130, 130, 130, 0.45);
  font-size: 17px;
  line-height: 26px;
  white-space: nowrap;
}

.watermark p {
  margin: 0;
}

.watermark .watermark-title {
  font-size: 23px;
}
```
